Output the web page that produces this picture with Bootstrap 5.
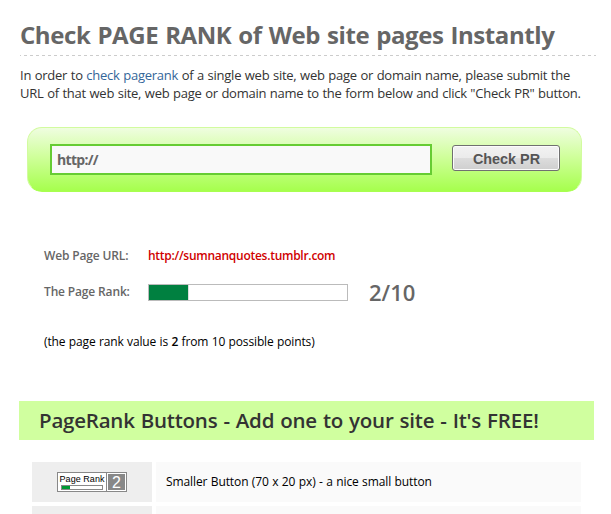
<!DOCTYPE html>
<html lang="en">
<head>
<meta charset="utf-8">
<title>Check Page Rank</title>
<meta name="viewport" content="width=device-width, initial-scale=1">
<link href="https://cdn.jsdelivr.net/npm/bootstrap@5.3.0/dist/css/bootstrap.min.css" rel="stylesheet">
<style>
body{font-family:"Trebuchet MS","Open Sans","Noto Sans",sans-serif;font-size:12px;line-height:18px;color:#000;background:#fff}
.sheet{width:611px;height:514px;padding:19px 0 0 20px;overflow:hidden}
h1{font-size:24px;line-height:32px;font-weight:700;color:#666;height:36px;letter-spacing:-.42px;word-spacing:1.2px}
.dashes{width:576px;height:1px;background:repeating-linear-gradient(90deg,#ccc 0 3px,transparent 3px 6px) -2px 0/582px 1px}
.intro{font-size:13px;color:#333;margin-top:10px;letter-spacing:-.255px;word-spacing:.5px}
.intro a{color:#369}
.pr-form{width:555px;height:65px;margin:25px 0 0 7px;padding:17px 21px 0 23px;border-radius:15px;border:1px solid #d2fb9f;border-bottom-color:#a8ff50;background:linear-gradient(#effde0,#d0ff9c 45%,#a6ff4d)}
.url-box{width:382px;height:31px;border:2px solid #6c3;border-radius:0;background:#f9f9f9;font-size:14px;font-weight:700;color:#666;padding:0 5px;line-height:27px;margin-left:-1px;margin-top:-1px;letter-spacing:-.7px}
.check-btn{width:108px;height:26px;border:1px solid #707070;border-radius:3px;box-shadow:inset 0 0 0 1px #fcfcfc;background:linear-gradient(#f2f2f2,#ebebeb 50%,#ddd 50%,#cfcfcf);font:700 14.4px/26px "Liberation Sans",Arial,sans-serif;color:#555;padding:0 0 0 1px}
.result{padding:0 0 0 24px}
.url-row{margin-top:55px}
.rank-row{margin-top:18px;height:18px}
.label-col{width:104px;font-weight:600;color:#666;letter-spacing:-.15px}
.site-url{color:#d00000;font-weight:600;letter-spacing:-.27px}
.meter{width:200px;height:17px;border:1px solid #bbb;border-radius:0;background:#fff}
.meter .progress-bar{background:#008040;border-right:1px solid #ddd}
.score{font-size:22px;font-weight:600;color:#666;margin-left:21px}
.note{margin-top:32px;letter-spacing:-.13px;word-spacing:.4px}
.note b{font-weight:600}
h2{width:575px;height:39px;margin:50px 0 0 -1px;padding-left:20px;background:#d0ff9f;color:#333;font-size:20.5px;line-height:39px;font-weight:600;letter-spacing:-.22px;word-spacing:.9px}
.btn-list{margin:22px 0 0 12px;width:549px}
.pic-cell{width:120px;height:40px;background:#eee}
.text-cell{width:425px;height:40px;background:#fafafa;padding-left:10px;letter-spacing:-.1px;word-spacing:.4px}
</style>
</head>
<body>
<main class="sheet">
<h1 class="mb-0 text-nowrap">Check PAGE RANK of Web site pages Instantly</h1>
<div class="dashes"></div>
<p class="intro mb-0 text-nowrap">In order to <a href="#" class="text-decoration-none">check pagerank</a> of a single web site, web page or domain name, please submit the<br>URL of that web site, web page or domain name to the form below and click "Check PR" button.</p>
<form class="pr-form d-flex justify-content-between align-items-start">
<input class="form-control url-box shadow-none" type="text" value="http://" aria-label="Web page URL">
<button class="btn check-btn" type="button">Check PR</button>
</form>
<section class="result">
<div class="url-row d-flex align-items-center"><div class="label-col">Web Page URL:</div><span class="site-url">http://sumnanquotes.tumblr.com</span></div>
<div class="rank-row d-flex align-items-center"><div class="label-col">The Page Rank:</div><div class="progress meter"><div class="progress-bar" style="width:20%"></div></div><span class="score">2/10</span></div>
<p class="note mb-0">(the page rank value is <b>2</b> from 10 possible points)</p>
</section>
<h2 class="mb-0 text-nowrap">PageRank Buttons - Add one to your site - It's FREE!</h2>
<div class="btn-list d-flex flex-column gap-1">
<div class="d-flex gap-1"><div class="pic-cell d-flex align-items-center justify-content-center">
<svg width="70" height="20" viewBox="0 0 70 20"><path fill="#888" d="M0 0h70v20H0z"/><path fill="#fff" d="M1 1h48v18H1zM50 1h19v18H50z"/><path fill="#888" d="M51 2h17v16H51zM4 13h42v5H4z"/><path fill="#fff" d="M5 14h40v3H5z"/><path fill="#093" d="M5 14h8v3H5z"/><text x="2.5" y="10" font-family="Liberation Sans" font-size="9" textLength="45">Page Rank</text><text x="55" y="16" font-family="Liberation Sans" font-size="16" fill="#fff">2</text></svg>
</div><div class="text-cell d-flex align-items-center">Smaller Button (70 x 20 px) - a nice small button</div></div>
<div class="d-flex gap-1"><div class="pic-cell"></div><div class="text-cell"></div></div>
</div>
</main>
<script src="https://cdn.jsdelivr.net/npm/bootstrap@5.3.0/dist/js/bootstrap.bundle.min.js"></script>
</body>
</html>
